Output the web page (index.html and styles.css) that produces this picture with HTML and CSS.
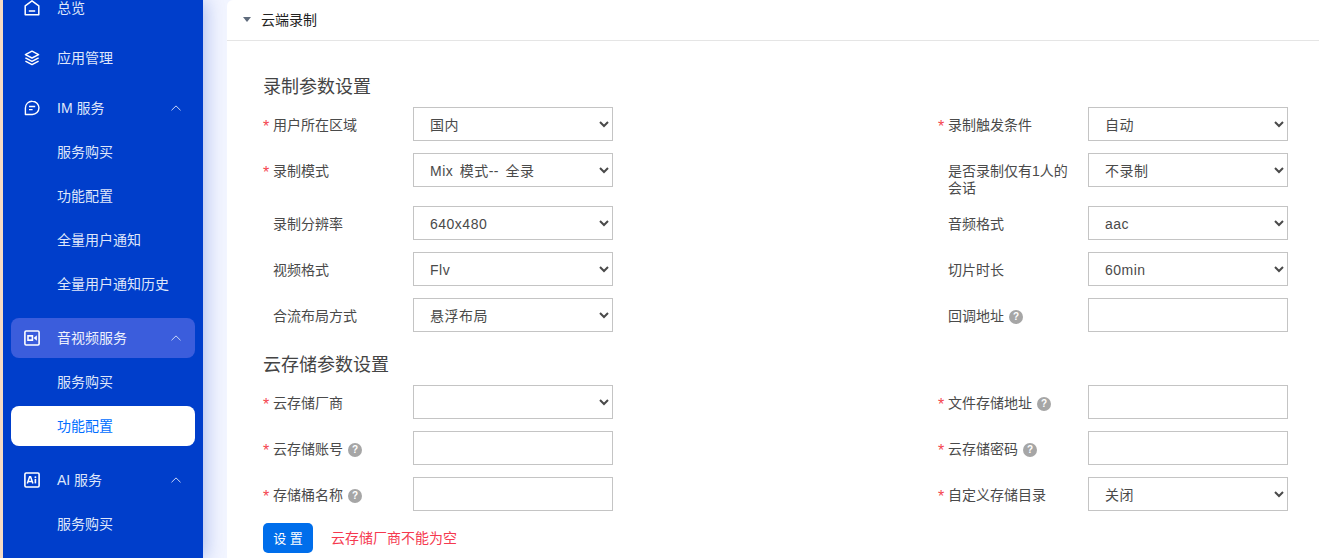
FILE: index.html
```html
<!DOCTYPE html>
<html lang="zh-CN">
<head>
<meta charset="utf-8">
<title>云端录制</title>
<link rel="stylesheet" href="styles.css">
</head>
<body>
<div class="app">
  <aside class="sidebar">
    <nav class="nav">
      <div class="group group-plain">
        <a class="item"><svg class="ico" viewBox="0 0 16 16"><path d="M1.2 14.7V5.9L8 .8l6.8 5.1v8.8z" fill="none" stroke="#fff" stroke-width="1.5" stroke-linejoin="round"/><path d="M4.8 11h6.4" stroke="#fff" stroke-width="1.5"/></svg><span>总览</span></a>
      </div>
      <div class="group group-plain">
        <a class="item"><svg class="ico" viewBox="0 0 16 16"><path d="M8 1.2l6.6 3.4L8 8 1.4 4.6z" fill="none" stroke="#fff" stroke-width="1.5" stroke-linejoin="round"/><path d="M1.4 7.9L8 11.3l6.6-3.4M1.4 11.1L8 14.6l6.6-3.5" fill="none" stroke="#fff" stroke-width="1.5" stroke-linejoin="round"/></svg><span>应用管理</span></a>
      </div>
      <div class="group">
        <a class="item"><svg class="ico" viewBox="0 0 16 16"><path d="M8.3 1.2a6.6 6.6 0 0 1 0 13.3H1.4V8A6.7 6.7 0 0 1 8.3 1.2z" fill="none" stroke="#fff" stroke-width="1.4" stroke-linejoin="round"/><path d="M5 6.5h6.2M5 9.6h3.6" stroke="#fff" stroke-width="1.4"/></svg><span>IM 服务</span><svg class="chev" viewBox="0 0 10 6"><path d="M.5 5.3L5 .9l4.5 4.4" fill="none" stroke="#c9d6f6" stroke-width="1"/></svg></a>
        <a class="item sub">服务购买</a>
        <a class="item sub">功能配置</a>
        <a class="item sub">全量用户通知</a>
        <a class="item sub">全量用户通知历史</a>
      </div>
      <div class="group">
        <a class="item item-open"><svg class="ico" viewBox="0 0 16 16"><rect x=".9" y="1" width="14.2" height="14" rx="1.2" fill="none" stroke="#fff" stroke-width="1.6"/><rect x="3.2" y="5" width="6" height="6" fill="#fff"/><rect x="4.8" y="6.7" width="2.8" height="2.6" fill="#3b5ddc"/><path d="M9.6 8l3.3-2.7v5.4z" fill="#fff"/></svg><span>音视频服务</span><svg class="chev" viewBox="0 0 10 6"><path d="M.5 5.3L5 .9l4.5 4.4" fill="none" stroke="#c9d6f6" stroke-width="1"/></svg></a>
        <a class="item sub">服务购买</a>
        <a class="item sub item-active">功能配置</a>
      </div>
      <div class="group">
        <a class="item"><svg class="ico" viewBox="0 0 16 16"><rect x=".9" y="1" width="14.2" height="14" rx="1.2" fill="none" stroke="#fff" stroke-width="1.6"/><path d="M3.3 11.4L5.6 4.8h1l2.3 6.6M4.2 9.4h3.8" fill="none" stroke="#fff" stroke-width="1.5"/><path d="M11.4 7v4.4" stroke="#fff" stroke-width="1.6"/><circle cx="11.4" cy="5.2" r=".95" fill="#fff"/></svg><span>AI 服务</span><svg class="chev" viewBox="0 0 10 6"><path d="M.5 5.3L5 .9l4.5 4.4" fill="none" stroke="#c9d6f6" stroke-width="1"/></svg></a>
        <a class="item sub">服务购买</a>
      </div>
    </nav>
  </aside>
  <main class="main">
    <header class="panel-head"><i class="caret"></i><span>云端录制</span></header>
    <form class="form">
      <h3 class="section-title">录制参数设置</h3>
      <div class="grid">
        <div class="field"><label class="label req">用户所在区域</label><select class="control"><option>国内</option></select></div>
        <div class="field"><label class="label req">录制触发条件</label><select class="control"><option>自动</option></select></div>
        <div class="field"><label class="label req">录制模式</label><select class="control"><option>Mix 模式-- 全录</option></select></div>
        <div class="field"><label class="label">是否录制仅有1人的会话</label><select class="control"><option>不录制</option></select></div>
        <div class="field"><label class="label">录制分辨率</label><select class="control"><option>640x480</option></select></div>
        <div class="field"><label class="label">音频格式</label><select class="control"><option>aac</option></select></div>
        <div class="field"><label class="label">视频格式</label><select class="control"><option>Flv</option></select></div>
        <div class="field"><label class="label">切片时长</label><select class="control"><option>60min</option></select></div>
        <div class="field"><label class="label">合流布局方式</label><select class="control"><option>悬浮布局</option></select></div>
        <div class="field"><label class="label">回调地址<i class="help">?</i></label><input class="control" type="text"></div>
      </div>
      <h3 class="section-title section-title-2">云存储参数设置</h3>
      <div class="grid">
        <div class="field"><label class="label req">云存储厂商</label><select class="control"><option></option></select></div>
        <div class="field"><label class="label req">文件存储地址<i class="help">?</i></label><input class="control" type="text"></div>
        <div class="field"><label class="label req">云存储账号<i class="help">?</i></label><input class="control" type="text"></div>
        <div class="field"><label class="label req">云存储密码<i class="help">?</i></label><input class="control" type="text"></div>
        <div class="field"><label class="label req">存储桶名称<i class="help">?</i></label><input class="control" type="text"></div>
        <div class="field"><label class="label req">自定义存储目录</label><select class="control"><option>关闭</option></select></div>
      </div>
      <div class="actions"><button class="btn" type="button">设 置</button><span class="err">云存储厂商不能为空</span></div>
    </form>
  </main>
</div>
</body>
</html>
```
FILE: styles.css
```css
* { box-sizing: border-box; }
html, body { margin: 0; height: 100%; overflow: hidden; }
body {
  font-family: "Liberation Sans", "Noto Sans CJK SC", sans-serif;
  font-size: 14px;
  color: #4a4a4a;
  background: #fff;
}
.app { display: flex; height: 558px; background: #f2f5ff; }
.sidebar {
  width: 203px;
  flex: none;
  background: #003ecb;
  border-left: 3px solid #f6dcc4;
  box-shadow: 2px 0 18px rgba(0, 50, 190, .3);
  padding: 0 8px;
  overflow: hidden;
}
.nav { margin-top: -12px; display: flex; flex-direction: column; }
.group { display: flex; flex-direction: column; gap: 4px; margin-bottom: 14px; }
.group-plain { margin-bottom: 10px; }
.item {
  height: 40px;
  flex: none;
  display: flex;
  align-items: center;
  padding-left: 13px;
  border-radius: 8px;
  color: #dfe6fa;
  line-height: 20px;
}
.ico { width: 16px; height: 16px; flex: none; margin-right: 17px; }
.chev { width: 10px; height: 6px; margin-left: auto; margin-right: 14px; }
.sub { padding-left: 46px; }
.item-open { background: #3b5ddc; color: #edf1fc; }
.item-active { background: #fff; color: #006eff; }
.main {
  flex: 1;
  margin-left: 24px;
  min-width: 0;
  background: #fff;
  border-top-left-radius: 6px;
}
.panel-head {
  height: 41px;
  border-bottom: 1px solid #e5e5e5;
  display: flex;
  align-items: center;
  padding: 0 0 2px 16px;
  color: #222;
}
.caret {
  width: 0;
  height: 0;
  border-left: 4px solid transparent;
  border-right: 4px solid transparent;
  border-top: 5px solid #5f6b7c;
  margin-right: 10px;
}
.form { padding: 33px 31px 0 36px; }
.section-title { margin: 0 0 7px; font-size: 18px; font-weight: 400; line-height: 26px; color: #444; }
.section-title-2 { margin-top: 20px; }
.grid { display: grid; grid-template-columns: 675px 350px; row-gap: 12px; }
.field { display: flex; align-items: flex-start; }
.label {
  width: 150px;
  flex: none;
  padding: 10px 20px 0 10px;
  margin-bottom: -3px;
  line-height: 17px;
  min-height: 34px;
  position: relative;
}
.req::before {
  content: "*";
  position: absolute;
  left: 0;
  top: 11px;
  font-size: 16px;
  color: #f5454f;
}
.help {
  display: inline-block;
  width: 14px;
  height: 14px;
  margin-left: 5px;
  border-radius: 50%;
  background: #a6a6a6;
  color: #fff;
  font: 700 10px/14px "Liberation Sans", sans-serif;
  text-align: center;
  vertical-align: 1px;
}
.control {
  width: 200px;
  height: 34px;
  flex: none;
  border: 1px solid #c4c4c4;
  border-radius: 0;
  background-color: #fff;
  padding: 2px 12px 0;
  font: 14px "Liberation Sans", "Noto Sans CJK SC", sans-serif;
  letter-spacing: .5px;
  word-spacing: 2px;
  color: #4a4a4a;
  outline: none;
}
.actions { display: flex; align-items: center; margin-top: 12px; }
.btn {
  width: 50px;
  height: 30px;
  border: 0;
  border-radius: 5px;
  background: #006eeb;
  color: #fff;
  font: 13px "Liberation Sans", "Noto Sans CJK SC", sans-serif;
  padding: 0 0 1px;
}
.err { margin-left: 18px; padding-bottom: 3px; color: #f5394f; }
```
